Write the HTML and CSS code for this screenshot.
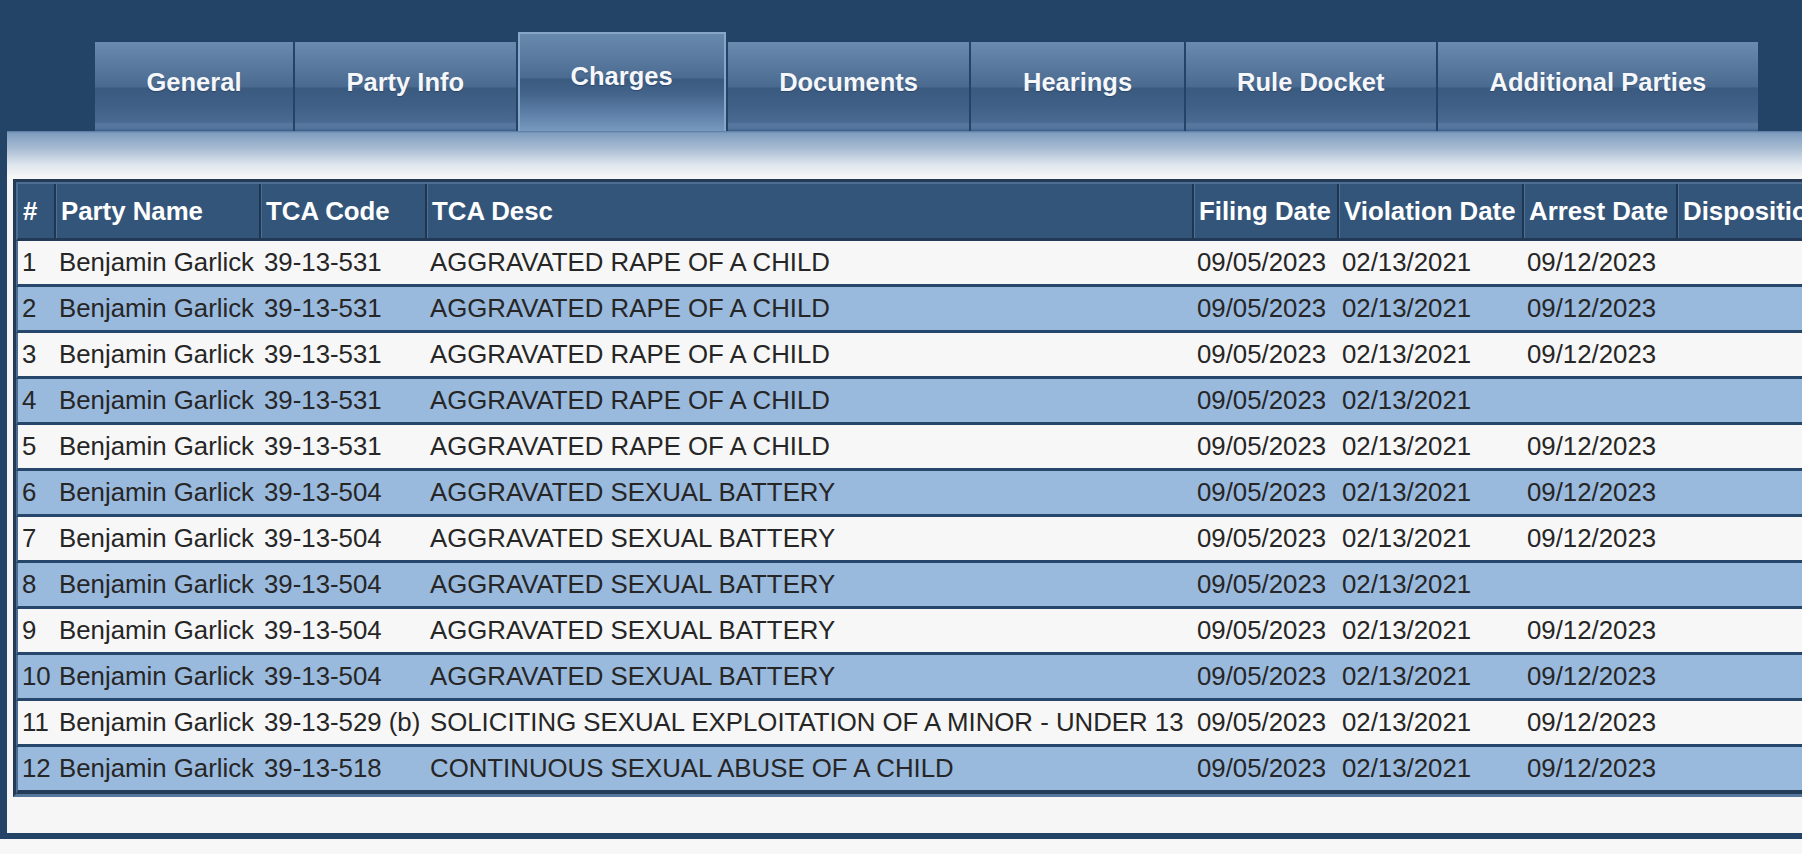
FILE: index.html
```html
<!DOCTYPE html>
<html lang="en">
<head>
<meta charset="utf-8">
<title>Charges</title>
<link rel="stylesheet" href="styles.css">
</head>
<body>
<div class="page">
  <div class="tabs">
    <div class="tab">General</div>
    <div class="tab">Party Info</div>
    <div class="tab active">Charges</div>
    <div class="tab">Documents</div>
    <div class="tab">Hearings</div>
    <div class="tab">Rule Docket</div>
    <div class="tab">Additional Parties</div>
  </div>
  <div class="panel">
    <div class="grid" role="table">
      <div class="row head" role="row">
        <div class="hc first">#</div><div class="hc">Party Name</div><div class="hc">TCA Code</div><div class="hc">TCA Desc</div><div class="hc">Filing Date</div><div class="hc">Violation Date</div><div class="hc">Arrest Date</div><div class="hc">Disposition</div>
      </div>
      <div class="row"><span class="c first">1</span><span class="c">Benjamin Garlick</span><span class="c">39-13-531</span><span class="c">AGGRAVATED RAPE OF A CHILD</span><span class="c">09/05/2023</span><span class="c">02/13/2021</span><span class="c">09/12/2023</span><span class="c"></span></div>
      <div class="row alt"><span class="c first">2</span><span class="c">Benjamin Garlick</span><span class="c">39-13-531</span><span class="c">AGGRAVATED RAPE OF A CHILD</span><span class="c">09/05/2023</span><span class="c">02/13/2021</span><span class="c">09/12/2023</span><span class="c"></span></div>
      <div class="row"><span class="c first">3</span><span class="c">Benjamin Garlick</span><span class="c">39-13-531</span><span class="c">AGGRAVATED RAPE OF A CHILD</span><span class="c">09/05/2023</span><span class="c">02/13/2021</span><span class="c">09/12/2023</span><span class="c"></span></div>
      <div class="row alt"><span class="c first">4</span><span class="c">Benjamin Garlick</span><span class="c">39-13-531</span><span class="c">AGGRAVATED RAPE OF A CHILD</span><span class="c">09/05/2023</span><span class="c">02/13/2021</span><span class="c"></span><span class="c"></span></div>
      <div class="row"><span class="c first">5</span><span class="c">Benjamin Garlick</span><span class="c">39-13-531</span><span class="c">AGGRAVATED RAPE OF A CHILD</span><span class="c">09/05/2023</span><span class="c">02/13/2021</span><span class="c">09/12/2023</span><span class="c"></span></div>
      <div class="row alt"><span class="c first">6</span><span class="c">Benjamin Garlick</span><span class="c">39-13-504</span><span class="c">AGGRAVATED SEXUAL BATTERY</span><span class="c">09/05/2023</span><span class="c">02/13/2021</span><span class="c">09/12/2023</span><span class="c"></span></div>
      <div class="row"><span class="c first">7</span><span class="c">Benjamin Garlick</span><span class="c">39-13-504</span><span class="c">AGGRAVATED SEXUAL BATTERY</span><span class="c">09/05/2023</span><span class="c">02/13/2021</span><span class="c">09/12/2023</span><span class="c"></span></div>
      <div class="row alt"><span class="c first">8</span><span class="c">Benjamin Garlick</span><span class="c">39-13-504</span><span class="c">AGGRAVATED SEXUAL BATTERY</span><span class="c">09/05/2023</span><span class="c">02/13/2021</span><span class="c"></span><span class="c"></span></div>
      <div class="row"><span class="c first">9</span><span class="c">Benjamin Garlick</span><span class="c">39-13-504</span><span class="c">AGGRAVATED SEXUAL BATTERY</span><span class="c">09/05/2023</span><span class="c">02/13/2021</span><span class="c">09/12/2023</span><span class="c"></span></div>
      <div class="row alt"><span class="c first">10</span><span class="c">Benjamin Garlick</span><span class="c">39-13-504</span><span class="c">AGGRAVATED SEXUAL BATTERY</span><span class="c">09/05/2023</span><span class="c">02/13/2021</span><span class="c">09/12/2023</span><span class="c"></span></div>
      <div class="row"><span class="c first">11</span><span class="c">Benjamin Garlick</span><span class="c">39-13-529 (b)</span><span class="c">SOLICITING SEXUAL EXPLOITATION OF A MINOR - UNDER 13</span><span class="c">09/05/2023</span><span class="c">02/13/2021</span><span class="c">09/12/2023</span><span class="c"></span></div>
      <div class="row alt last"><span class="c first">12</span><span class="c">Benjamin Garlick</span><span class="c">39-13-518</span><span class="c">CONTINUOUS SEXUAL ABUSE OF A CHILD</span><span class="c">09/05/2023</span><span class="c">02/13/2021</span><span class="c">09/12/2023</span><span class="c"></span></div>
    </div>
  </div>
</div>
</body>
</html>
```
FILE: styles.css
```css
html, body {
  margin: 0;
  padding: 0;
  overflow: hidden;
  background: #f7f7f7;
}

body {
  font-family: "Liberation Sans", Arial, sans-serif;
}

.page {
  width: max-content;
  min-width: 100vw;
  background: #234467;
  padding: 0 0 6px 7px;
}

/* ---------- tabs ---------- */
.tabs {
  display: flex;
  align-items: flex-end;
  gap: 2px;
  padding: 32px 0 0 88px;
}

.tab {
  box-sizing: border-box;
  height: 89px;
  padding: 25px 51.5px 0;
  font-size: 25.5px;
  line-height: 30px;
  font-weight: bold;
  color: #f5f7fa;
  white-space: nowrap;
  text-shadow: 0 1px 1px rgba(10, 30, 60, 0.35);
  background: linear-gradient(to bottom,
    #6a8ab0 0%,
    #5a7aa0 25%,
    #4a6a90 50%,
    #3b5a80 52%,
    #405f86 70%,
    #4a6a91 90%,
    #5878a0 92%,
    #53749c 97%,
    #3f5f87 100%);
}

.tab.active {
  height: 99px;
  padding: 27px 51px 0;
  border: 2px solid #88a7c8;
  border-bottom: 0;
  background: linear-gradient(to bottom,
    #6889ae 0%,
    #5a7aa0 25%,
    #4b6b91 45%,
    #3a5a80 47%,
    #44648b 62%,
    #5e80a8 82%,
    #7799bf 100%);
}

/* ---------- panel ---------- */
.panel {
  padding: 48px 0 36px 6px;
  background: linear-gradient(to bottom,
    #5577a0 0px,
    #7f9dbf 2px,
    #a9bdd3 18px,
    #dfe6ee 34px,
    #f6f6f6 46px) #f6f6f6;
}

.grid {
  width: 1960px;
  border-top: 3px solid #243a55;
  border-left: 3px solid #243a55;
  border-bottom: 3px solid #56769b;
  font-size: 25.8px;
}

.row {
  display: grid;
  grid-template-columns: 38px 205px 166px 767px 145px 185px 154px 300px;
  box-sizing: border-box;
  height: 46px;
  border-left: 2px solid #4e6d92;
  border-bottom: 3px solid #26466b;
  background: #f7f7f7;
  color: #262626;
}

.row.alt {
  background: #99b9dd;
}

.row.last {
  height: 47px;
  border-bottom-width: 4px;
  border-bottom-color: #233c5a;
}

.row.head {
  height: 59px;
  border-top: 2px solid #4e6d92;
  border-bottom-color: #223a57;
  background: #34557a;
  color: #ffffff;
  font-weight: bold;
}

.hc {
  box-sizing: border-box;
  display: flex;
  align-items: center;
  padding-left: 4px;
  white-space: nowrap;
  overflow: hidden;
  border-left: 1px solid #4f6f95;
  border-right: 2px solid #1f3651;
}

.hc.first {
  border-left: 0;
  padding-left: 5px;
}

.c {
  display: flex;
  align-items: center;
  padding-left: 3px;
  white-space: nowrap;
}

.c.first {
  padding-left: 4px;
}
```
